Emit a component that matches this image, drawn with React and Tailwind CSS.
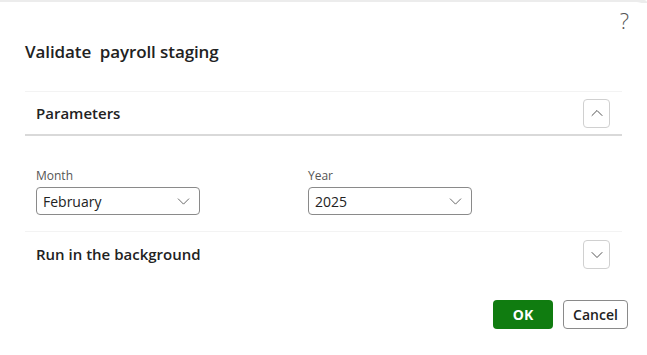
import { ChevronDown, ChevronUp } from 'lucide-react';

const font = { fontFamily: '"Open Sans", "Noto Sans", Arial, sans-serif' };

function Select({ label, value }) {
  return (
    <div className="flex flex-col w-[164px]">
      <span className="text-[12px] leading-[16px] text-[#555]">{label}</span>
      <div className="mt-[3px] h-[28px] rounded-[4px] border border-[#8a8a8a] flex items-center justify-between pl-[6px] pr-[5px]">
        <span className="text-[14px] text-[#222]">{value}</span>
        <ChevronDown size={21} strokeWidth={1} className="text-[#555]" />
      </div>
    </div>
  );
}

function SectionToggle({ open }) {
  return (
    <button
      type="button"
      className="w-[27px] h-[29px] rounded-[4px] border border-[#d0d0d0] flex items-center justify-center bg-white"
    >
      {open ? (
        <ChevronUp size={20} strokeWidth={1.1} className="text-[#444]" />
      ) : (
        <ChevronDown size={20} strokeWidth={1.1} className="text-[#444]" />
      )}
    </button>
  );
}

export default function App() {
  return (
    <div className="w-[647px] h-[355px] bg-white overflow-hidden relative" style={font}>
      <div className="h-[3px] bg-[#ececec] rounded-tr-[10px]" />
      <div className="bg-white rounded-tr-[10px] -mt-[1px] h-[352px] flex flex-col">
        <div className="flex justify-end pr-[18px] pt-[5px] h-[30px]">
          <span className="text-[22px] font-light text-[#555] leading-[26px]">?</span>
        </div>
        <h1 className="ml-[25px] mt-[9px] text-[17px] font-semibold text-[#222] leading-[22px] tracking-[-0.1px]">
          Validate&nbsp; payroll staging
        </h1>

        <div className="mx-[25px] mt-[28px] border-t border-[#f3f3f3]">
          <div className="flex items-center justify-between pl-[11px] pr-[12px] h-[44px] border-b-2 border-[#d9d9d9]">
            <span className="text-[15px] font-semibold text-[#222]">Parameters</span>
            <SectionToggle open />
          </div>
          <div className="flex gap-[108px] pl-[11px] pt-[32px] pb-[16px]">
            <Select label="Month" value="February" />
            <Select label="Year" value="2025" />
          </div>
          <div className="border-t border-[#f3f3f3] flex items-center justify-between pl-[11px] pr-[12px] h-[46px]">
            <span className="text-[15px] font-semibold text-[#222]">Run in the background</span>
            <SectionToggle open={false} />
          </div>
        </div>

        <div className="flex justify-end gap-[10px] pr-[19px] mt-[23px]">
          <button
            type="button"
            className="w-[60px] h-[29px] rounded-[4px] bg-[#107c10] text-white text-[14px] font-bold"
          >
            OK
          </button>
          <button
            type="button"
            className="w-[65px] h-[29px] rounded-[4px] border border-[#8a8a8a] text-[#222] text-[14px] font-semibold"
          >
            Cancel
          </button>
        </div>
      </div>
    </div>
  );
}
